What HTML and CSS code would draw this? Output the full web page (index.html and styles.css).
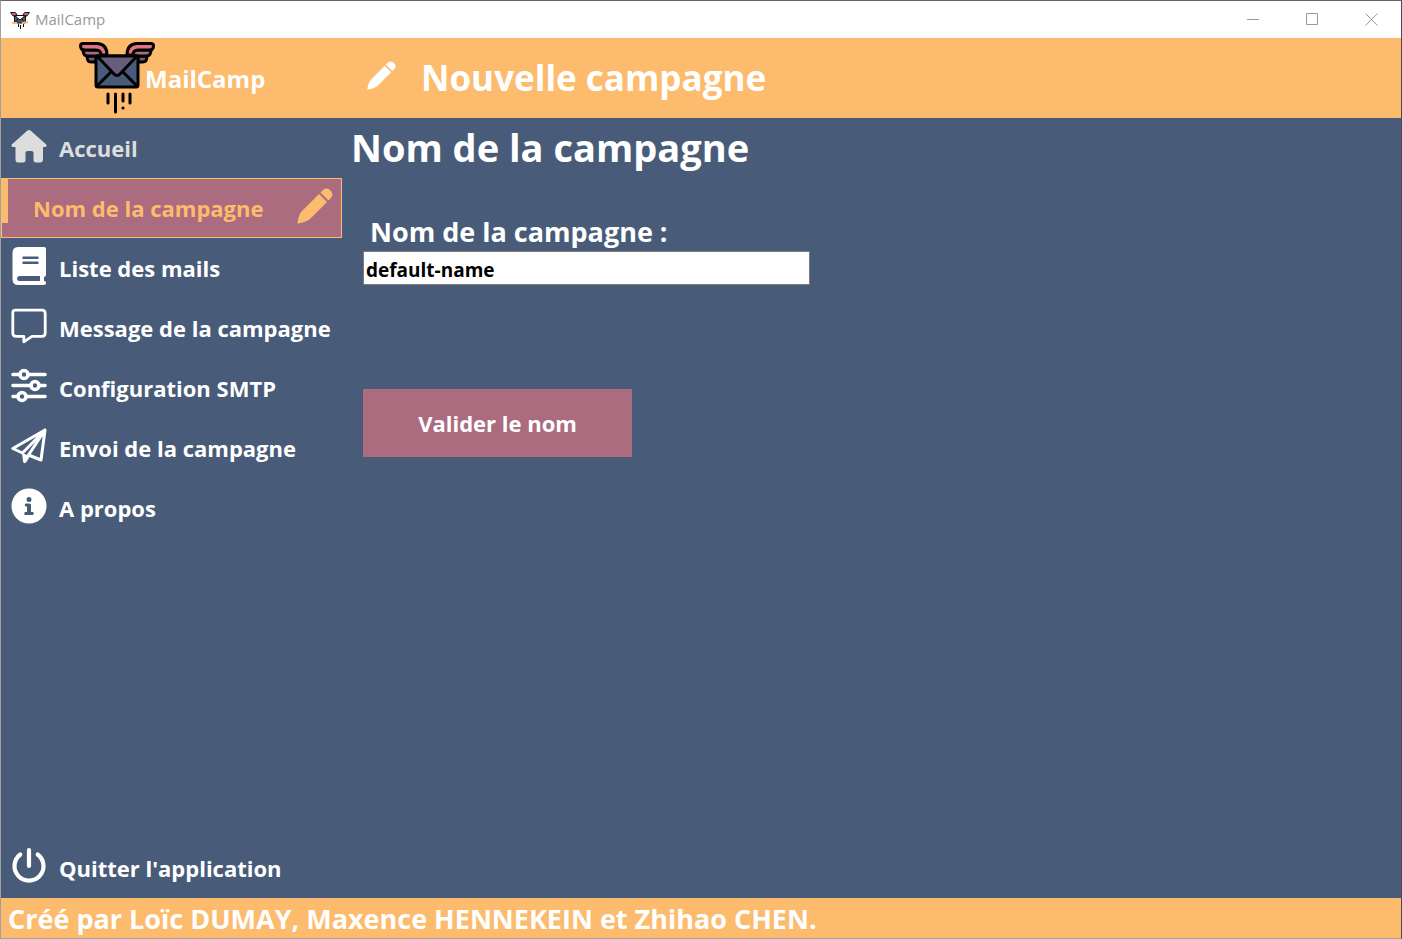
FILE: index.html
```html
<!DOCTYPE html>
<html lang="fr">
<head>
<meta charset="utf-8">
<meta name="viewport" content="width=device-width, initial-scale=1">
<title>MailCamp</title>
<link rel="stylesheet" href="styles.css">
</head>
<body>
<svg class="sprite" aria-hidden="true">
  <symbol id="logo" viewBox="0 0 76 72">
    <g stroke="#000" stroke-width="3" stroke-linejoin="round" stroke-linecap="round">
      <g id="wing">
        <path fill="#685d7a" d="M8 14H17V20H12Q8 20 8 14Z"/>
        <path fill="#ac6c80" d="M4 8H19Q23 9 23 14H9Q4 14 4 8Z"/>
        <path fill="#e07484" d="M4 1.500H18Q28 2 28 13H22Q22 8 17 8H6Q1.500 8 1.500 4Q1.500 1.500 4 1.500Z"/>
      </g>
      <use href="#wing" transform="translate(76 0) scale(-1 1)"/>
      <rect x="17" y="14" width="42" height="31" rx="2" fill="#485c7a"/>
      <path fill="none" d="M18 44L32 30M58 44L44 30"/>
      <path fill="#685d7a" d="M18 14H58L41 32Q38 35 35 32Z"/>
      <path fill="none" d="M29 52V61M36.500 52V70M44 52V59M44 66V66.100M51 52V61"/>
    </g>
  </symbol>
  <symbol id="pencil" viewBox="0 0 36 36">
    <path d="M22 6L30 14L13 31Q9 34 1 35.500Q0 35.500 .500 34Q2 26 5 23ZM23.500 4.500L26 2Q30-1 33.500 2.500Q37 6 34 10L31.500 12.500Z"/>
  </symbol>
</svg>
<div class="window">
  <header class="titlebar">
    <svg class="app-icon" viewBox="0 0 20 18" aria-hidden="true">
      <path fill="#c96878" stroke="#222" d="M.500 1.500H5Q7 2 7 5H3ZM19.500 1.500H15Q13 2 13 5H17Z"/>
      <path fill="#485c7a" stroke="#111" d="M4.500 4.500H15.500V12H4.500ZM5 5L10 9L15 5M5 12L8 8M15 12L12 8"/>
      <path fill="none" stroke="#fdbb6e" stroke-width="2" d="M2 12H7M12 12L18 11"/>
      <path stroke="#111" d="M8.500 13V16M10.500 14V18M13.500 13V16"/>
    </svg>
    <span class="app-name">MailCamp</span>
    <div class="window-controls">
      <button type="button" aria-label="Réduire"><svg viewBox="0 0 13 13"><path d="M0 6.500H12"/></svg></button>
      <button type="button" aria-label="Agrandir"><svg viewBox="0 0 13 13"><path d="M.500 .500H11.500V11.500H.500Z"/></svg></button>
      <button type="button" aria-label="Fermer"><svg viewBox="0 0 13 13"><path d="M.500 .500L12.500 12.500M12.500 .500L.500 12.500"/></svg></button>
    </div>
  </header>
  <div class="banner">
    <div class="brand">
      <svg class="brand-logo" aria-hidden="true"><use href="#logo"/></svg>
      <span class="brand-name">MailCamp</span>
    </div>
    <svg class="banner-icon" aria-hidden="true"><use href="#pencil"/></svg>
    <h1 class="banner-title">Nouvelle campagne</h1>
  </div>
  <div class="body">
    <nav class="sidebar">
      <button type="button" class="item home">
        <svg viewBox="0 0 36 36" aria-hidden="true"><path d="M16.500 2.600Q18 1.400 19.500 2.600L35 16.200Q36.500 18 34.500 19H32V31.500Q32 34.500 29 34.500H25Q22.500 34.500 22.500 32V25Q22.500 23 20.500 23H16.500Q14.500 23 14.500 25V32Q14.500 34.500 12 34.500H7Q4.500 34.500 4.500 31.500V19H1.800Q-.500 18 1 16.200Z"/></svg>
        <span>Accueil</span>
      </button>
      <button type="button" class="item active" aria-current="page">
        <span>Nom de la campagne</span>
        <svg aria-hidden="true"><use href="#pencil"/></svg>
      </button>
      <button type="button" class="item">
        <svg viewBox="0 0 36 36" aria-hidden="true"><path fill-rule="evenodd" d="M7-1H33Q35-1 35 1V27Q35 28.500 33 29V33H34Q35 33.500 35 35Q35 37 33 37H7Q1.500 37 1.500 31V5Q1.500-1 7-1ZM8 28Q6 28.500 6 30.500Q6 32.500 8 33H29V28ZM12 8.500Q10.500 10 12 11H27Q28.500 10 27 8.500ZM12 13.500Q10.500 15 12 16H27Q28.500 15 27 13.500Z"/></svg>
        <span>Liste des mails</span>
      </button>
      <button type="button" class="item">
        <svg viewBox="0 0 36 36" aria-hidden="true"><path class="line" stroke-width="2.800" d="M4.500 2.200H31Q34.200 2.200 34.200 5.500V25Q34.200 28.300 31 28.300H21L12.800 33.800V28.300H5Q1.800 28.300 1.800 25V5Q1.800 2.200 4.500 2.200Z"/></svg>
        <span>Message de la campagne</span>
      </button>
      <button type="button" class="item">
        <svg viewBox="0 0 36 36" aria-hidden="true"><g class="line" stroke-width="3.600"><path d="M2 6.500H9M17 6.500H34M2 17.500H20M28 17.500H34M2 28.500H7M15 28.500H34"/><circle cx="13" cy="6.500" r="4"/><circle cx="24" cy="17.500" r="4"/><circle cx="11" cy="28.500" r="4"/></g></svg>
        <span>Configuration SMTP</span>
      </button>
      <button type="button" class="item">
        <svg viewBox="0 0 36 36" aria-hidden="true"><path class="line" stroke-width="3" d="M34 2L1.800 20.500L11.500 25L34 2L30 32L17.500 27L34 2"/><path d="M11 25L19 28L15.500 34Q13 36.500 12 33.500Z"/></svg>
        <span>Envoi de la campagne</span>
      </button>
      <button type="button" class="item">
        <svg viewBox="0 0 36 36" aria-hidden="true"><path fill-rule="evenodd" d="M18 .500A17.500 17.500 0 1 1 18 35.500A17.500 17.500 0 1 1 18 .500ZM18 9A2.500 2.500 0 1 0 18 14A2.500 2.500 0 1 0 18 9ZM14.500 15.500Q13 17 14.500 18.500H16V24H14Q12.500 25.500 14 27H22Q23.500 25.500 22 24H20V17Q20 15.500 18.500 15.500Z"/></svg>
        <span>A propos</span>
      </button>
      <button type="button" class="item quit">
        <svg viewBox="0 0 36 36" aria-hidden="true"><path class="line" stroke-width="4.200" d="M18 2V18M9.300 6.500A14.500 14.500 0 1 0 26.700 6.500"/></svg>
        <span>Quitter l'application</span>
      </button>
    </nav>
    <main class="content">
      <h2>Nom de la campagne</h2>
      <form class="form">
        <label for="campaign">Nom de la campagne :</label>
        <input id="campaign" type="text" value="default-name">
        <button type="button" class="submit">Valider le nom</button>
      </form>
    </main>
  </div>
  <footer class="footer">Créé par Loïc DUMAY, Maxence HENNEKEIN et Zhihao CHEN.</footer>
</div>
</body>
</html>
```
FILE: styles.css
```css
* {
  box-sizing: border-box;
}

body {
  margin: 0;
  font-family: "Open Sans", "Noto Sans", sans-serif;
  font-weight: 700;
  color: #fff;
}

button {
  font: inherit;
  color: inherit;
  border: 0;
  padding: 0;
  background: none;
}

svg {
  flex: none;
  fill: currentColor;
}

.sprite {
  display: none;
}

.window {
  display: flex;
  flex-direction: column;
  min-height: 100vh;
  border: 1px solid #a0a0a0;
  border-top-color: #69606e;
  border-right-color: #4d4858;
}

.titlebar {
  display: flex;
  align-items: center;
  height: 37px;
  padding-left: 9px;
  background: #fff;
  color: #999;
}

.app-icon {
  width: 20px;
  height: 18px;
}

.app-name {
  margin-left: 5px;
  padding-bottom: 2px;
  font-size: 15px;
  font-weight: 400;
}

.window-controls {
  display: flex;
  margin-left: auto;
}

.window-controls button {
  display: grid;
  place-items: center;
  width: 59px;
  height: 37px;
}

.window-controls svg {
  width: 13px;
  height: 13px;
  fill: none;
  stroke: #999;
}

.banner {
  display: flex;
  align-items: center;
  height: 80px;
  background: #fdbb6e;
}

.brand {
  display: flex;
  align-items: center;
  width: 341px;
  padding-left: 78px;
}

.brand-logo {
  width: 76px;
  height: 72px;
  margin-right: -10px;
}

.brand-name {
  font-size: 24px;
}

.banner-icon {
  width: 29px;
  height: 29px;
  margin: 0 25px 6px 25px;
}

.banner-title {
  margin: 0;
  padding-bottom: 2px;
  font-size: 35px;
  font-weight: 700;
}

.body {
  display: flex;
  flex: 1;
  background: #485c7a;
}

.sidebar {
  display: flex;
  flex-direction: column;
  width: 341px;
  font-size: 22px;
}

.item {
  display: flex;
  align-items: center;
  gap: 12px;
  height: 60px;
  padding: 0 10px;
  text-align: left;
  white-space: nowrap;
}

.item svg {
  width: 36px;
  height: 36px;
  margin-bottom: 4px;
  overflow: visible;
}

.item .line {
  fill: none;
  stroke: currentColor;
  stroke-linecap: round;
  stroke-linejoin: round;
}

.home {
  color: #ddd;
}

.active {
  position: relative;
  justify-content: space-between;
  padding: 0 8px 0 31px;
  border: 1px solid #fdbb6e;
  background: #ac6c80;
  color: #fdbb6e;
}

.active::before {
  content: "";
  position: absolute;
  top: 0;
  left: 0;
  width: 6px;
  height: 44px;
  background: #fdbb6e;
}

.quit {
  margin-top: auto;
}

.content {
  flex: 1;
  padding-left: 9px;
}

.content h2 {
  margin: 0;
  font-size: 38px;
  font-weight: 700;
  line-height: 58px;
}

.form {
  display: flex;
  flex-direction: column;
  align-items: flex-start;
  padding: 38px 0 0 12px;
}

.form label {
  padding-left: 7px;
  font-size: 27px;
  line-height: 36px;
}

.form input {
  width: 100%;
  max-width: 447px;
  height: 34px;
  margin-top: 1px;
  padding: 3px 2px 0;
  border: 1px solid #7a7a7a;
  border-radius: 0;
  background: #fff;
  color: #000;
  font: inherit;
  font-size: 19px;
}

.submit {
  width: 269px;
  height: 68px;
  margin-top: 104px;
  background: #ac6c80;
  font-size: 22px;
}

.footer {
  height: 40px;
  padding-left: 7px;
  background: #fdbb6e;
  font-size: 27px;
  line-height: 42px;
}
```
